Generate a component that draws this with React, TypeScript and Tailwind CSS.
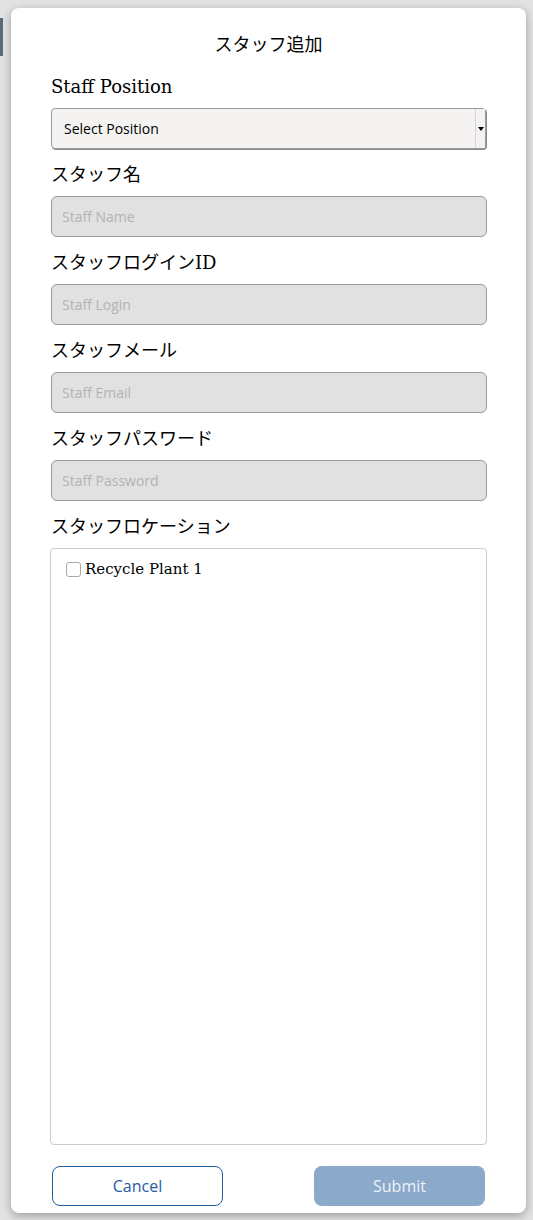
import React from "react";

const jp = { fontFamily: '"DejaVu Serif", "Noto Sans CJK JP", serif' };
const sans = { fontFamily: '"Open Sans", "Noto Sans", sans-serif' };

function Label({ children, first }: { children: React.ReactNode; first?: boolean }) {
  return (
    <div
      className={`text-[18px] leading-6 text-black ${first ? "pt-0" : "pt-[14px]"} pb-[9px]`}
      style={jp}
    >
      {children}
    </div>
  );
}

function Field({ placeholder }: { placeholder: string }) {
  return (
    <input
      placeholder={placeholder}
      disabled
      className="block w-[436px] h-[41px] rounded-[6px] border border-[#9a9a9a] bg-[#e1e1e1] px-[10px] text-[14px] placeholder:text-[#b3b3b3]"
      style={sans}
    />
  );
}

export default function App() {
  return (
    <div className="relative w-[533px] h-[1220px] bg-[#e2e2e2] overflow-hidden">
      <div className="absolute left-0 top-[18px] w-[3px] h-[38px] bg-[#5d6b78]" />
      <div className="absolute left-[11px] top-[8px] w-[515px] h-[1205px] bg-white rounded-[8px] shadow-[0_3px_10px_rgba(0,0,0,0.3)] pl-[40px] pr-[39px] pt-[23px] flex flex-col">
        <div
          className="text-center text-[18px] leading-6 text-black pb-[20px] -ml-[1px]"
          style={{ fontFamily: '"Noto Sans CJK JP", sans-serif' }}
        >
          スタッフ追加
        </div>
        <Label first>Staff Position</Label>
        <div className="relative w-[435px] h-[41px] rounded-[4px] border border-[#9a9a9a] bg-[#f4f3f1] flex items-center shadow-[1px_1px_0_#8a8a8a]">
          <span className="pl-[12px] text-[14px] text-black" style={sans}>
            Select Position
          </span>
          <div className="absolute right-0 top-0 bottom-0 w-[10px] border-l border-[#d6d6d6] bg-[#f4f3f1] flex items-center justify-center">
            <div className="w-0 h-0 border-l-[3px] border-r-[3px] border-t-[4px] border-l-transparent border-r-transparent border-t-black" />
          </div>
        </div>
        <Label>スタッフ名</Label>
        <Field placeholder="Staff Name" />
        <Label>スタッフログインID</Label>
        <Field placeholder="Staff Login" />
        <Label>スタッフメール</Label>
        <Field placeholder="Staff Email" />
        <Label>スタッフパスワード</Label>
        <Field placeholder="Staff Password" />
        <Label>スタッフロケーション</Label>
        <div className="-ml-[1px] w-[437px] h-[597px] rounded-[4px] border border-[#cccccc] pt-[9px] pl-[15px]">
          <label className="flex items-center gap-[4px] text-[15px] text-black" style={jp}>
            <span className="inline-block w-[15px] h-[15px] border border-[#aaa] rounded-[3px] bg-white" />
            Recycle Plant 1
          </label>
        </div>
        <div className="mt-[21px] flex justify-between pl-[1px] pr-[2px]">
          <button
            className="w-[171px] h-[40px] rounded-[8px] border border-[#1f5ba3] bg-white text-[#1f5ba3] text-[16px]"
            style={sans}
          >
            Cancel
          </button>
          <button
            className="w-[171px] h-[40px] rounded-[8px] bg-[#8aa9cb] text-[#eef2f7] text-[16px]"
            style={sans}
          >
            Submit
          </button>
        </div>
      </div>
    </div>
  );
}
